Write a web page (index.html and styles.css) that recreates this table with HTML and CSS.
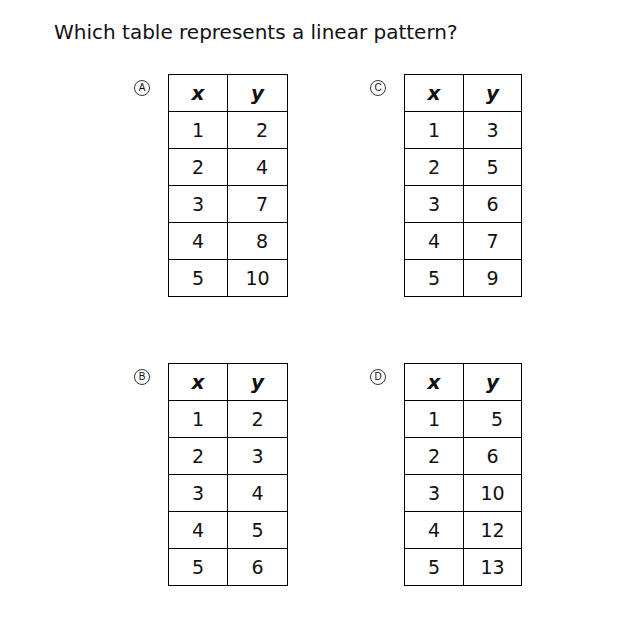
FILE: index.html
```html
<!DOCTYPE html>
<html>
<head>
<meta charset="utf-8">
<link rel="stylesheet" href="styles.css">
</head>
<body>
<h1 class="question">Which table represents a linear pattern?</h1>
<div class="options">
  <div class="option">
    <span class="bubble">A</span>
    <table class="tbl wide">
      <tr><th>x</th><th>y</th></tr>
      <tr><td>1</td><td class="shift">2</td></tr>
      <tr><td>2</td><td class="shift">4</td></tr>
      <tr><td>3</td><td class="shift">7</td></tr>
      <tr><td>4</td><td class="shift">8</td></tr>
      <tr><td>5</td><td>10</td></tr>
    </table>
  </div>
  <div class="option">
    <span class="bubble">C</span>
    <table class="tbl narrow">
      <tr><th>x</th><th>y</th></tr>
      <tr><td>1</td><td>3</td></tr>
      <tr><td>2</td><td>5</td></tr>
      <tr><td>3</td><td>6</td></tr>
      <tr><td>4</td><td>7</td></tr>
      <tr><td>5</td><td>9</td></tr>
    </table>
  </div>
  <div class="option">
    <span class="bubble">B</span>
    <table class="tbl wide">
      <tr><th>x</th><th>y</th></tr>
      <tr><td>1</td><td>2</td></tr>
      <tr><td>2</td><td>3</td></tr>
      <tr><td>3</td><td>4</td></tr>
      <tr><td>4</td><td>5</td></tr>
      <tr><td>5</td><td>6</td></tr>
    </table>
  </div>
  <div class="option">
    <span class="bubble">D</span>
    <table class="tbl narrow">
      <tr><th>x</th><th>y</th></tr>
      <tr><td>1</td><td class="shift">5</td></tr>
      <tr><td>2</td><td>6</td></tr>
      <tr><td>3</td><td>10</td></tr>
      <tr><td>4</td><td>12</td></tr>
      <tr><td>5</td><td>13</td></tr>
    </table>
  </div>
</div>
</body>
</html>
```
FILE: styles.css
```css
html, body {
  margin: 0;
  padding: 0;
  background: #ffffff;
}
body {
  font-family: "DejaVu Sans", Verdana, sans-serif;
  color: #111111;
}
.question {
  margin: 0;
  padding: 20px 0 0 54px;
  font-size: 20px;
  font-weight: normal;
  line-height: 24px;
}
.options {
  display: grid;
  grid-template-columns: 236px 236px;
  row-gap: 66px;
  padding: 30px 0 0 134px;
}
.option {
  display: flex;
  align-items: flex-start;
}
.bubble {
  width: 14px;
  height: 14px;
  margin-top: 6px;
  margin-right: 18px;
  border: 1px solid #333333;
  border-radius: 50%;
  font-size: 10px;
  line-height: 14px;
  text-align: center;
  font-family: "Liberation Sans", Arial, sans-serif;
  color: #111111;
  flex: none;
}
.tbl {
  border-collapse: collapse;
  font-size: 19px;
}
.tbl th, .tbl td {
  border: 1px solid #000000;
  height: 37px;
  padding: 0;
  text-align: center;
  box-sizing: border-box;
}
.tbl th {
  font-weight: bold;
  font-style: italic;
  font-size: 20px;
}
.wide th:first-child, .wide td:first-child { width: 59px; }
.wide th:last-child, .wide td:last-child { width: 60px; }
.narrow th:first-child, .narrow td:first-child { width: 59px; }
.narrow th:last-child, .narrow td:last-child { width: 58px; }
.tbl td.shift {
  padding-left: 9px;
}
```
